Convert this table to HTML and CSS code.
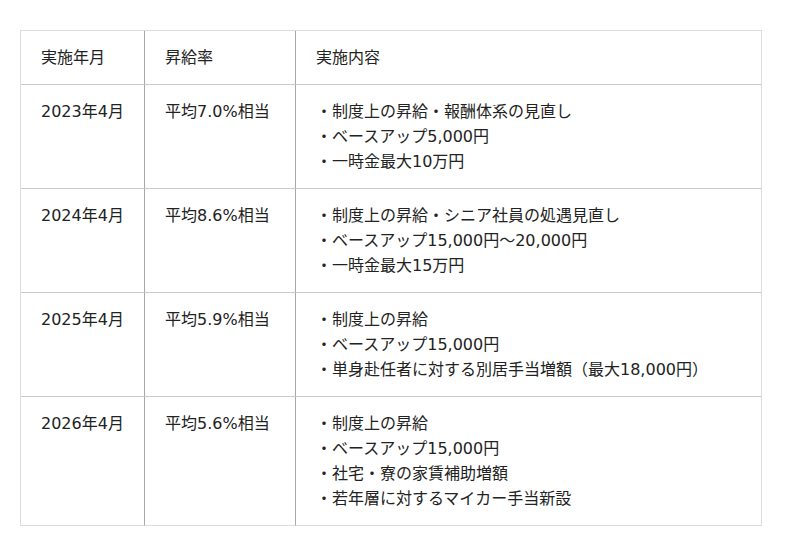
FILE: index.html
```html
<!DOCTYPE html>
<html lang="ja">
<head>
<meta charset="utf-8">
<link rel="stylesheet" href="styles.css">
</head>
<body>
<div class="wrap">
<table class="raise">
  <colgroup>
    <col class="c1"><col class="c2"><col class="c3">
  </colgroup>
  <thead>
    <tr><th>実施年月</th><th>昇給率</th><th>実施内容</th></tr>
  </thead>
  <tbody>
    <tr>
      <td>2023年4月</td><td>平均7.0%相当</td>
      <td><ul class="items"><li>・制度上の昇給・報酬体系の見直し</li><li>・ベースアップ5,000円</li><li>・一時金最大10万円</li></ul></td>
    </tr>
    <tr>
      <td>2024年4月</td><td>平均8.6%相当</td>
      <td><ul class="items"><li>・制度上の昇給・シニア社員の処遇見直し</li><li>・ベースアップ15,000円～20,000円</li><li>・一時金最大15万円</li></ul></td>
    </tr>
    <tr>
      <td>2025年4月</td><td>平均5.9%相当</td>
      <td><ul class="items"><li>・制度上の昇給</li><li>・ベースアップ15,000円</li><li>・単身赴任者に対する別居手当増額（最大18,000円）</li></ul></td>
    </tr>
    <tr class="last">
      <td>2026年4月</td><td>平均5.6%相当</td>
      <td><ul class="items"><li>・制度上の昇給</li><li>・ベースアップ15,000円</li><li>・社宅・寮の家賃補助増額</li><li>・若年層に対するマイカー手当新設</li></ul></td>
    </tr>
  </tbody>
</table>
</div>
</body>
</html>
```

FILE: styles.css
```css
html, body {
  margin: 0;
  padding: 0;
  background: #ffffff;
}
body {
  font-family: "DejaVu Sans", "Noto Sans CJK JP", sans-serif;
  font-size: 16px;
  line-height: 25px;
  color: #222222;
}
.wrap {
  padding: 30px 20px;
}
.raise {
  width: 742px;
  table-layout: fixed;
  border-collapse: separate;
  border-spacing: 0;
  border-top: 1px solid #dcdcdc;
  border-left: 1px solid #dcdcdc;
}
.c1 { width: 124px; }
.c2 { width: 151px; }
.c3 { width: 466px; }
.raise th,
.raise td {
  box-sizing: border-box;
  padding: 14px 20px;
  text-align: left;
  vertical-align: top;
  font-weight: normal;
  border-right: 1px solid #a8a8a8;
  border-bottom: 1px solid #c8c8c8;
  white-space: nowrap;
}
.raise th:last-child,
.raise td:last-child {
  border-right-color: #dcdcdc;
}
.raise tr.last td {
  border-bottom-color: #dcdcdc;
}
.items {
  list-style: none;
  margin: 0;
  padding: 0;
}
```
